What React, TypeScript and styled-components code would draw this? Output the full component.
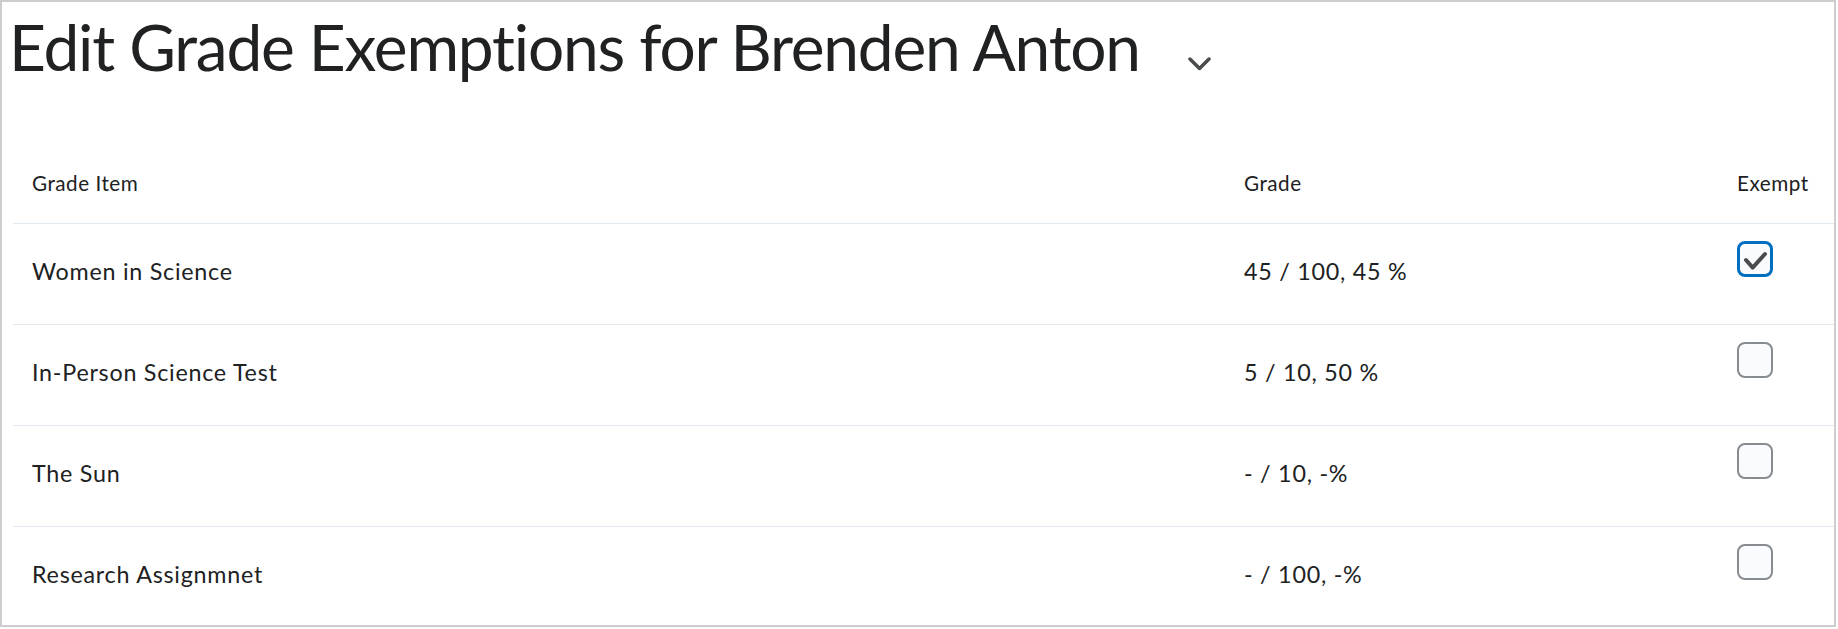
import React from "react";
import styled, { createGlobalStyle } from "styled-components";

const GlobalStyle = createGlobalStyle`
  html, body {
    margin: 0;
    padding: 0;
    background: #ffffff;
  }
  body {
    font-family: Lato, "Open Sans", "Liberation Sans", sans-serif;
    color: #202122;
    font-variant-ligatures: none;
  }
  * {
    box-sizing: border-box;
  }
`;

const Frame = styled.div`
  width: 1836px;
  height: 627px;
  border: 2px solid #cdcdcd;
  overflow: hidden;
`;

const TitleBar = styled.div`
  display: flex;
  align-items: flex-start;
  padding: 6px 0 0 7px;
`;

const Title = styled.h1`
  margin: 0;
  font-size: 64px;
  font-weight: 400;
  line-height: 77px;
  color: #202122;
  letter-spacing: -1.2px;
`;

const ChevronButton = styled.button`
  display: flex;
  width: 23px;
  height: 14px;
  margin: 49px 0 0 48px;
  padding: 0;
  border: none;
  background: transparent;
  cursor: pointer;
  color: #494c4e;
`;

const Table = styled.div`
  margin: 0 0 0 11px;
  width: calc(100% - 11px);
`;

const Row = styled.div<{ $header?: boolean }>`
  display: grid;
  grid-template-columns: 1212px 493px 1fr;
  height: ${(p) => (p.$header ? "auto" : "101px")};
  border-top: ${(p) => (p.$header ? "none" : "1px solid #e3e9f1")};
  padding: ${(p) => (p.$header ? "86px 0 28px" : "0")};
`;

const HeadCell = styled.div`
  padding: 0 19px;
  font-size: 20.7px;
  line-height: 24px;
  letter-spacing: 0.5px;
  color: #202122;
  white-space: nowrap;
`;

const Cell = styled.div`
  display: flex;
  align-items: center;
  padding: 0 19px 6px;
  font-size: 23.3px;
  line-height: 28px;
  letter-spacing: 0.75px;
  color: #202122;
  white-space: nowrap;
`;

const CheckCell = styled.div`
  padding: 17px 19px 0;
`;

const Box = styled.span<{ $checked?: boolean }>`
  display: flex;
  width: 36px;
  height: 36px;
  border-radius: 8px;
  border: ${(p) => (p.$checked ? "3px solid #006fbf" : "2px solid #868c8f")};
  background: #f9fbff;
  cursor: pointer;
`;

type Item = { name: string; grade: string; exempt: boolean };

const items: Item[] = [
  { name: "Women in Science", grade: "45 / 100, 45 %", exempt: true },
  { name: "In-Person Science Test", grade: "5 / 10, 50 %", exempt: false },
  { name: "The Sun", grade: "- / 10, -%", exempt: false },
  { name: "Research Assignmnet", grade: "- / 100, -%", exempt: false },
];

function Chevron() {
  return (
    <svg width="23" height="14" viewBox="0 0 23 14" fill="none">
      <path
        d="M2 2 L11.5 11.5 L21 2"
        stroke="currentColor"
        strokeWidth="3.5"
        strokeLinecap="round"
        strokeLinejoin="round"
      />
    </svg>
  );
}

function Checkmark() {
  return (
    <svg width="30" height="30" viewBox="0 0 30 30" fill="none">
      <path
        d="M6 16 L12.7 23.6 L25 10"
        stroke="#494c4e"
        strokeWidth="4"
        strokeLinecap="round"
        strokeLinejoin="round"
      />
    </svg>
  );
}

export default function App() {
  return (
    <>
      <GlobalStyle />
      <Frame>
        <TitleBar>
          <Title>Edit Grade Exemptions for Brenden Anton</Title>
          <ChevronButton aria-label="Select student">
            <Chevron />
          </ChevronButton>
        </TitleBar>

        <Table>
          <Row $header>
            <HeadCell>Grade Item</HeadCell>
            <HeadCell>Grade</HeadCell>
            <HeadCell>Exempt</HeadCell>
          </Row>
          {items.map((item) => (
            <Row key={item.name}>
              <Cell>{item.name}</Cell>
              <Cell>{item.grade}</Cell>
              <CheckCell>
                <Box $checked={item.exempt} role="checkbox" aria-checked={item.exempt}>
                  {item.exempt && <Checkmark />}
                </Box>
              </CheckCell>
            </Row>
          ))}
        </Table>
      </Frame>
    </>
  );
}
